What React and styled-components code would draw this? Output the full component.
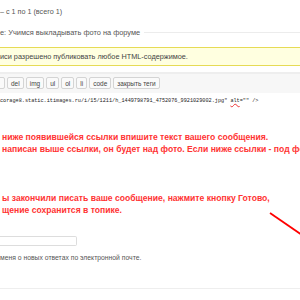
import React from "react";
import styled, { createGlobalStyle } from "styled-components";

const Global = createGlobalStyle`
  html, body {
    margin: 0;
    padding: 0;
    background: #fff;
  }
  body {
    font-family: "Liberation Sans", Arial, sans-serif;
    overflow: hidden;
  }
`;

const Page = styled.div`
  position: relative;
  width: 300px;
  height: 300px;
  overflow: hidden;
`;

const Pager = styled.div`
  padding-top: 7px;
  height: 10px;
  font-size: 7.2px;
  line-height: 10px;
  color: #555;
  white-space: nowrap;
`;

const TitleRow = styled.div`
  display: flex;
  align-items: center;
  gap: 4px;
  margin-top: 10px;
  height: 10px;
  font-size: 7.4px;
  color: #555;
  white-space: nowrap;
  &::after {
    content: "";
    flex: 1;
    border-top: 1px solid #ececec;
  }
`;

const Notice = styled.div`
  margin-top: 10px;
  height: 17px;
  line-height: 17px;
  background: #ffffe0;
  border-top: 1px solid #e6db55;
  border-bottom: 1px solid #e6db55;
  font-size: 7.3px;
  color: #444;
  white-space: nowrap;
`;

const Editor = styled.div`
  margin-top: 6px;
  border-top: 2px solid #eee;
`;

const Toolbar = styled.div`
  display: flex;
  gap: 2px;
  padding: 3px 0 4px;
  background: #f7f7f7;
  margin-left: -6px;
`;

const Btn = styled.span`
  display: inline-flex;
  align-items: center;
  justify-content: center;
  height: 10px;
  min-width: ${(p) => p.$w || 0}px;
  padding: 0 3px;
  background: #fafafa;
  border: 1px solid #d4d4d4;
  border-radius: 2px;
  font-size: 6.5px;
  color: #444;
`;

const Body = styled.div`
  padding-top: 4px;
`;

const Code = styled.div`
  font-family: "Liberation Mono", monospace;
  font-size: 5.2px;
  line-height: 8px;
  color: #222;
  white-space: nowrap;
  span {
    text-decoration: underline wavy #e33;
  }
`;

const Red = styled.p`
  margin: ${(p) => p.$top}px 0 0 2px;
  font-size: 8.6px;
  font-weight: bold;
  line-height: 12px;
  color: #f33;
  white-space: nowrap;
`;

const Field = styled.div`
  margin-top: 20px;
  width: 76px;
  height: 8px;
  border: 1px solid #ddd;
  border-left: none;
  border-radius: 0 2px 2px 0;
`;

const Subscribe = styled.div`
  margin-top: 8px;
  font-size: 6.8px;
  color: #555;
  white-space: nowrap;
`;

const Rule = styled.div`
  margin-top: 27px;
  border-top: 1px solid #eee;
`;

const Arrow = styled.svg`
  position: absolute;
  left: 0;
  top: 0;
  pointer-events: none;
`;

export default function App() {
  return (
    <Page>
      <Global />
      <Pager>– с 1 по 1 (всего 1)</Pager>
      <TitleRow>е: Учимся выкладывать фото на форуме</TitleRow>
      <Notice>иси разрешено публиковать любое HTML-содержимое.</Notice>
      <Editor>
        <Toolbar>
          <Btn $w={3} />
          <Btn>del</Btn>
          <Btn>img</Btn>
          <Btn>ul</Btn>
          <Btn>ol</Btn>
          <Btn>li</Btn>
          <Btn>code</Btn>
          <Btn>закрыть теги</Btn>
        </Toolbar>
        <Body>
          <Code>
            corage8.static.itimages.ru/i/15/1211/h_1449798791_4752076_9921029002.jpg" <span>alt</span>="" /&gt;
          </Code>
          <Red $top={26}>ниже появившейся ссылки впишите текст вашего сообщения.</Red>
          <Red $top={0}>написан выше ссылки, он будет над фото. Если ниже ссылки - под фото.</Red>
          <Red $top={37}>ы закончили писать ваше сообщение, нажмите кнопку Готово,</Red>
          <Red $top={0}>щение сохранится в топике.</Red>
        </Body>
      </Editor>
      <Field />
      <Subscribe>меня о новых ответах по электронной почте.</Subscribe>
      <Rule />
      <Arrow width="300" height="300" viewBox="0 0 300 300">
        <line x1="270" y1="213" x2="302" y2="235" stroke="#f00" strokeWidth="1.8" />
      </Arrow>
    </Page>
  );
}
